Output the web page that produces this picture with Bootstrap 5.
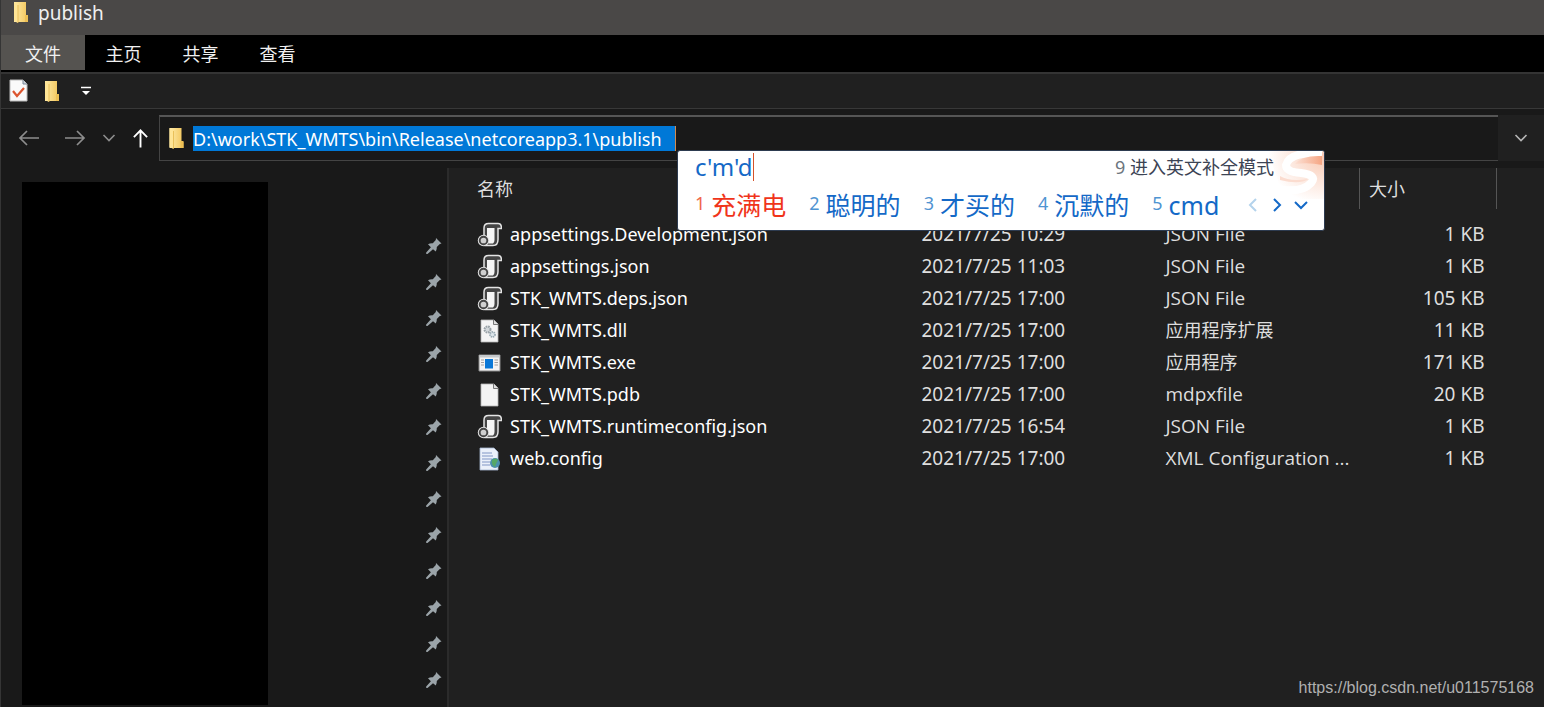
<!DOCTYPE html>
<html lang="zh-CN">
<head>
<meta charset="utf-8">
<meta name="viewport" content="width=device-width, initial-scale=1">
<title>publish</title>
<link href="https://cdn.jsdelivr.net/npm/bootstrap@5.3.0/dist/css/bootstrap.min.css" rel="stylesheet">
<style>
  body { font-family: "Noto Sans", "Noto Sans CJK SC", sans-serif; font-size: 19px; line-height: 24px; color: #f0f0f0; background: #191919; }
  svg { display: block; flex: none; }
  button { color: inherit; }
  .explorer { border-left: 1px solid #353535; }
  .title-bar { height: 35px; background: #4a4847; padding: 0 0 10px 11px; }
  .ribbon { height: 39px; background: #000; border-bottom: 2px solid #343434; font-size: 18px; }
  .ribbon .tab-btn { height: 35px; width: 77px; padding: 2px 0 0; border: 0; background: none; }
  .ribbon .file-tab { width: 84px; background: #555350; }
  .quick-bar { height: 35px; background: #202020; border-bottom: 1px solid #383838; padding-left: 8px; }
  .quick-bar button, .nav-row button { border: 0; padding: 0; background: none; }
  .nav-row { padding-top: 6px; height: 59px; }
  .nav-btns { width: 158px; height: 46px; padding-left: 17px; color: #8d8d8d; }
  .address { height: 46px; border: 1px solid #444; border-top: 2px solid #555; border-right: 0; padding-left: 8px; background: #191919; }
  .address input { width: 483px; height: 25px; padding: 0; border: 0; border-right: 1px solid #d08a50; outline: 0; background: #0078d7; color: #fff; font-size: 18px; }
  .addr-drop { width: 46px; height: 46px; background: #202020 !important; color: #b5b5b5; }
  .side { width: 448px; border-right: 2px solid #2b2b2b; padding: 14px 5px 2px 21px; }
  .quick-list { width: 246px; background: #000; }
  .pins { padding: 56px 0 17px; margin: 0; list-style: none; color: #9ba4a9; }
  .files { background: #202020; padding-right: 47px; }
  .files table { table-layout: fixed; width: 100%; color: #dedede; }
  .files th { height: 41px; font-size: 18px; font-weight: 400; padding: 0 0 0 9px; }
  .files td { height: 32px; padding: 0 0 0 10px; white-space: nowrap; }
  .files td.fname, .files th.fname { padding-left: 28px; font-size: 18px; color: #fff; }
  .files th.fname { color: #dedede; }
  .files .sized { border-left: 1px solid #555; border-right: 1px solid #555; }
  .files td.fsize { text-align: right; padding-right: 12px; }
  .files td.ftype { font-family: "Open Sans", "Noto Sans CJK SC", sans-serif; }
  .files td.cjk { font-size: 18px; }
  .files tr.gap-row td { height: 9px; padding: 0; }
  .col-date { width: 244px; } .col-type { width: 204px; } .col-size { width: 137px; }
  .ime { position: absolute; z-index: 5; left: 676px; top: 41px; width: 648px; height: 81px; background: #fff; border: 1px solid #2d3b50; border-radius: 3px; overflow: hidden; color: #1469c7; }
  .ime .typed { font-size: 24px; line-height: 28px; border-right: 1px solid #d4532b; }
  .ime .mode { position: relative; font-size: 18px; color: #3c4454; }
  .ime .cand { display: flex; gap: 6px; font-size: 25px; line-height: 36px; color: #1469c7; }
  .ime .cand-no { font-size: 18px; line-height: 32px; color: #4f94d2; }
  .ime .picked { color: #f0341a; } .ime .picked .cand-no { color: #f0674a; }
  .ime .skin { position: absolute; right: 0; top: 0; }
  .ime .top-line { padding: 2px 50px 0 17px; }
  .cands { gap: 23px; padding: 6px 0 0 17px; }
  .cand-nav { padding-left: 4px; gap: 10px; }
  .watermark { position: absolute; right: 10px; bottom: 8px; font: 16px/22px "Liberation Sans", sans-serif; color: #b0b0b0; text-decoration: none; }
</style>
</head>
<body>
<svg width="0" height="0" class="position-absolute" aria-hidden="true">
  <defs>
    <linearGradient id="gold" x1="0" x2="1"><stop offset="0" stop-color="#ffeba8"/><stop offset="1" stop-color="#f2c55a"/></linearGradient>
    <symbol id="folder" viewBox="0 0 16 23"><path d="M1 1h12v13l2 1v6H1z" fill="url(#gold)"/><path d="M12 14h3v7h-3z" fill="#edc055"/><path d="M1 1l4 3v18l-4-2z" fill="#ffe596"/><path d="M5 4v18" stroke="#e0b040" stroke-width=".7"/></symbol>
    <symbol id="script" viewBox="0 0 25 25"><path d="M7 16V6q0-4.500 4.500-4.500H21q3.500 0 3.500 5H21v11q0 6-5 6H8z" fill="#444" stroke="#e4e4e4" stroke-width="1.500"/><path d="M10 6h7.500v12q0 2.500-1.500 3.500h-4.500L10 15z" fill="#f5f5f5"/><circle cx="6.500" cy="18.500" r="5.700" fill="#e4e4e4"/><circle cx="6.500" cy="18.500" r="3.800" fill="#d0d0d0" stroke="#454545" stroke-width="1.900"/></symbol>
    <symbol id="page" viewBox="0 0 25 25"><path d="M4 2h13l4 4v18H4z" fill="#f4f4f4" stroke="#b5b5b5" stroke-width=".8"/><path d="M16.500 2v4.500H21" fill="#ddd" stroke="#777"/></symbol>
    <symbol id="gears" viewBox="0 0 25 25"><use href="#page"/><circle cx="10.500" cy="11.500" r="3" fill="#d2d7da" stroke="#98a1a6" stroke-width="2" stroke-dasharray="1.600 .8"/><circle cx="15.500" cy="16.500" r="2.500" fill="#dce5ea" stroke="#98a9b2" stroke-width="1.800" stroke-dasharray="1.400 .7"/></symbol>
    <symbol id="exe" viewBox="0 0 25 25"><path d="M2 5h21v16H2z" fill="#f4f4f4" stroke="#8a8a8a"/><path d="M2.500 5h20v2.500h-20z" fill="#c4c8cb"/><path d="M8 9h8v9.500H8z" fill="#0a78d7"/><path d="M4 10h3M4 12.500h3M4 15h3M17.500 10H21M17.500 12.500H21M17.500 15H21" stroke="#a0a0a0"/></symbol>
    <symbol id="config" viewBox="0 0 25 25"><path d="M3 2h14l4 4v18H3z" fill="#eaf0fa" stroke="#a4b5cf" stroke-width=".8"/><path d="M5 7h10M5 10h11M5 13h10M5 16h8M5 19h8" stroke="#8096c5"/><circle cx="18" cy="17" r="5" fill="#4b8fae"/><path d="M15 14q4-3 6 0l-2 4-1 3q-4-2-3-7z" fill="#55a866"/></symbol>
    <symbol id="pin" viewBox="0 0 16 16"><path d="M10 0l5.500 5.500-1.700.5-3 3q.2 2.500-1 4.500L7 11.200 1.500 16 0 15.700.2 14.500 4.900 9.300 2 6.200q2-1.200 4.800-1L9.800 2z" fill="currentColor"/></symbol>
    <symbol id="down" viewBox="0 0 14 14"><path d="M1.500 4l5.500 5.500L12.500 4" fill="none" stroke="currentColor" stroke-width="1.600"/></symbol>
  </defs>
</svg>

<div class="explorer d-flex flex-column min-vh-100 position-relative">
  <header class="title-bar d-flex align-items-center gap-2">
    <svg width="18" height="23"><use href="#folder"/></svg><span>publish</span>
  </header>
  <nav class="ribbon d-flex" aria-label="功能区">
    <button class="tab-btn file-tab">文件</button><button class="tab-btn">主页</button><button class="tab-btn">共享</button><button class="tab-btn">查看</button>
  </nav>
  <div class="quick-bar d-flex align-items-center">
    <button aria-label="属性"><svg width="19" height="24" viewBox="0 0 19 24"><path d="M1 1h13l4 4v17H1z" fill="#fafafa" stroke="#bbb"/><path d="M14 1v4h4" fill="#cdd6e0" stroke="#7b8795"/><path d="M4 12l4 5 7-8" fill="none" stroke="#dc5630" stroke-width="2.200"/></svg></button>
    <button aria-label="新建文件夹" class="px-3"><svg width="16" height="23"><use href="#folder"/></svg></button>
    <button aria-label="自定义快速访问工具栏" class="ms-1"><svg width="12" height="12" viewBox="0 0 12 12"><path d="M1 2.500h10" stroke="#fff" stroke-width="1.500"/><path d="M2 6h8l-4 4z" fill="#fff"/></svg></button>
  </div>
  <div class="nav-row d-flex position-relative">
    <div class="nav-btns d-flex align-items-center flex-shrink-0">
      <button aria-label="后退"><svg width="22" height="20" viewBox="0 0 22 20"><path d="M21 10H2M9 3l-7 7 7 7" fill="none" stroke="currentColor" stroke-width="1.700"/></svg></button>
      <button aria-label="前进" class="ms-4"><svg width="22" height="20" viewBox="0 0 22 20"><path d="M1 10h19M13 3l7 7-7 7" fill="none" stroke="currentColor" stroke-width="1.700"/></svg></button>
      <button aria-label="最近位置" class="ms-3"><svg width="14" height="14"><use href="#down"/></svg></button>
      <button aria-label="上移" class="ms-3 text-white"><svg width="17" height="22" viewBox="0 0 18 22"><path d="M9 21V3M2 10l7-7 7 7" fill="none" stroke="currentColor" stroke-width="2"/></svg></button>
    </div>
    <div class="address d-flex align-items-center flex-grow-1">
      <svg width="17" height="23" class="me-2"><use href="#folder"/></svg>
      <input type="text" aria-label="地址" spellcheck="false" value="D:\work\STK_WMTS\bin\Release\netcoreapp3.1\publish">
    </div>
    <button class="addr-drop d-flex align-items-center justify-content-center" aria-label="以前的位置"><svg width="14" height="14"><use href="#down"/></svg></button>

    <div class="ime">
      <svg class="skin" width="64" height="60" viewBox="0 0 64 60" aria-hidden="true">
        <defs>
          <radialGradient id="blush" cx="1" cy="0.100" r="1"><stop offset="0" stop-color="#f9c9b3"/><stop offset="1" stop-color="#fff"/></radialGradient>
          <linearGradient id="glow" x1="0" x2="1"><stop offset="0" stop-color="#fce0d4"/><stop offset="1" stop-color="#f5a583"/></linearGradient>
        </defs>
        <path d="M8 0h56v48H24z" fill="url(#blush)"/>
        <path d="M62 3Q30 0 26 14q0 7 15 8 17 2 10 10-12 13-44 3" fill="none" stroke="#fff" stroke-width="8"/>
        <path d="M35 13Q42 4 62 5v9q-13-3-27-1z" fill="url(#glow)"/>
        <path d="M20 25q10 6 28 3-8 6-28 1z" fill="#fbdccf"/>
      </svg>
      <div class="top-line d-flex align-items-center justify-content-between">
        <span class="typed">c'm'd</span><span class="mode"><span class="text-secondary">9</span> 进入英文补全模式</span>
      </div>
      <div class="cands d-flex align-items-center">
        <button class="cand picked"><span class="cand-no">1</span><span>充满电</span></button>
        <button class="cand"><span class="cand-no">2</span><span>聪明的</span></button>
        <button class="cand"><span class="cand-no">3</span><span>才买的</span></button>
        <button class="cand"><span class="cand-no">4</span><span>沉默的</span></button>
        <button class="cand"><span class="cand-no">5</span><span>cmd</span></button>
        <span class="cand-nav d-flex align-items-center"><button aria-label="上一页"><svg width="14" height="14" viewBox="0 0 14 14"><path d="M10 1L4 7l6 6" fill="none" stroke="#b4d3ec" stroke-width="2"/></svg></button><button aria-label="下一页"><svg width="14" height="14" viewBox="0 0 14 14"><path d="M4 1l6 6-6 6" fill="none" stroke="#1469c7" stroke-width="2"/></svg></button><button aria-label="展开"><svg width="14" height="14" viewBox="0 0 14 14"><path d="M1 4l6 6 6-6" fill="none" stroke="#1469c7" stroke-width="2"/></svg></button></span>
      </div>
    </div>
  </div>

  <div class="d-flex flex-grow-1">
    <aside class="side d-flex justify-content-between flex-shrink-0">
      <div class="quick-list"></div>
      <ul class="pins d-flex flex-column justify-content-between" id="pins"></ul>
    </aside>
    <main class="files flex-grow-1">
      <table>
        <colgroup><col><col class="col-date"><col class="col-type"><col class="col-size"></colgroup>
        <thead><tr><th class="fname">名称</th><th aria-label="修改日期"></th><th aria-label="类型"></th><th class="sized">大小</th></tr></thead>
        <tbody id="rows"><tr class="gap-row" aria-hidden="true"><td colspan="4"></td></tr></tbody>
      </table>
    </main>
  </div>
  <a class="watermark" href="https://blog.csdn.net/u011575168">https://blog.csdn.net/u011575168</a>
</div>
<script src="https://cdn.jsdelivr.net/npm/bootstrap@5.3.0/dist/js/bootstrap.bundle.min.js"></script>
<script>
  document.getElementById('pins').innerHTML =
    '<li><svg width="16" height="16"><use href="#pin"/></svg></li>'.repeat(13);
  const files = [
    ['script', 'appsettings.Development.json', '2021/7/25 10:29', 'JSON File', '1 KB'],
    ['script', 'appsettings.json', '2021/7/25 11:03', 'JSON File', '1 KB'],
    ['script', 'STK_WMTS.deps.json', '2021/7/25 17:00', 'JSON File', '105 KB'],
    ['gears', 'STK_WMTS.dll', '2021/7/25 17:00', '应用程序扩展', '11 KB'],
    ['exe', 'STK_WMTS.exe', '2021/7/25 17:00', '应用程序', '171 KB'],
    ['page', 'STK_WMTS.pdb', '2021/7/25 17:00', 'mdpxfile', '20 KB'],
    ['script', 'STK_WMTS.runtimeconfig.json', '2021/7/25 16:54', 'JSON File', '1 KB'],
    ['config', 'web.config', '2021/7/25 17:00', 'XML Configuration ...', '1 KB']
  ];
  document.getElementById('rows').insertAdjacentHTML('beforeend', files.map(([icon, name, date, type, size]) =>
    `<tr><td class="fname"><span class="d-flex align-items-center"><svg width="25" height="25" class="me-2"><use href="#${icon}"/></svg><span>${name}</span></span></td>
     <td>${date}</td><td class="ftype${/[^\x00-\x7f]/.test(type) ? ' cjk' : ''}">${type}</td><td class="fsize">${size}</td></tr>`).join(''));
</script>
</body>
</html>
